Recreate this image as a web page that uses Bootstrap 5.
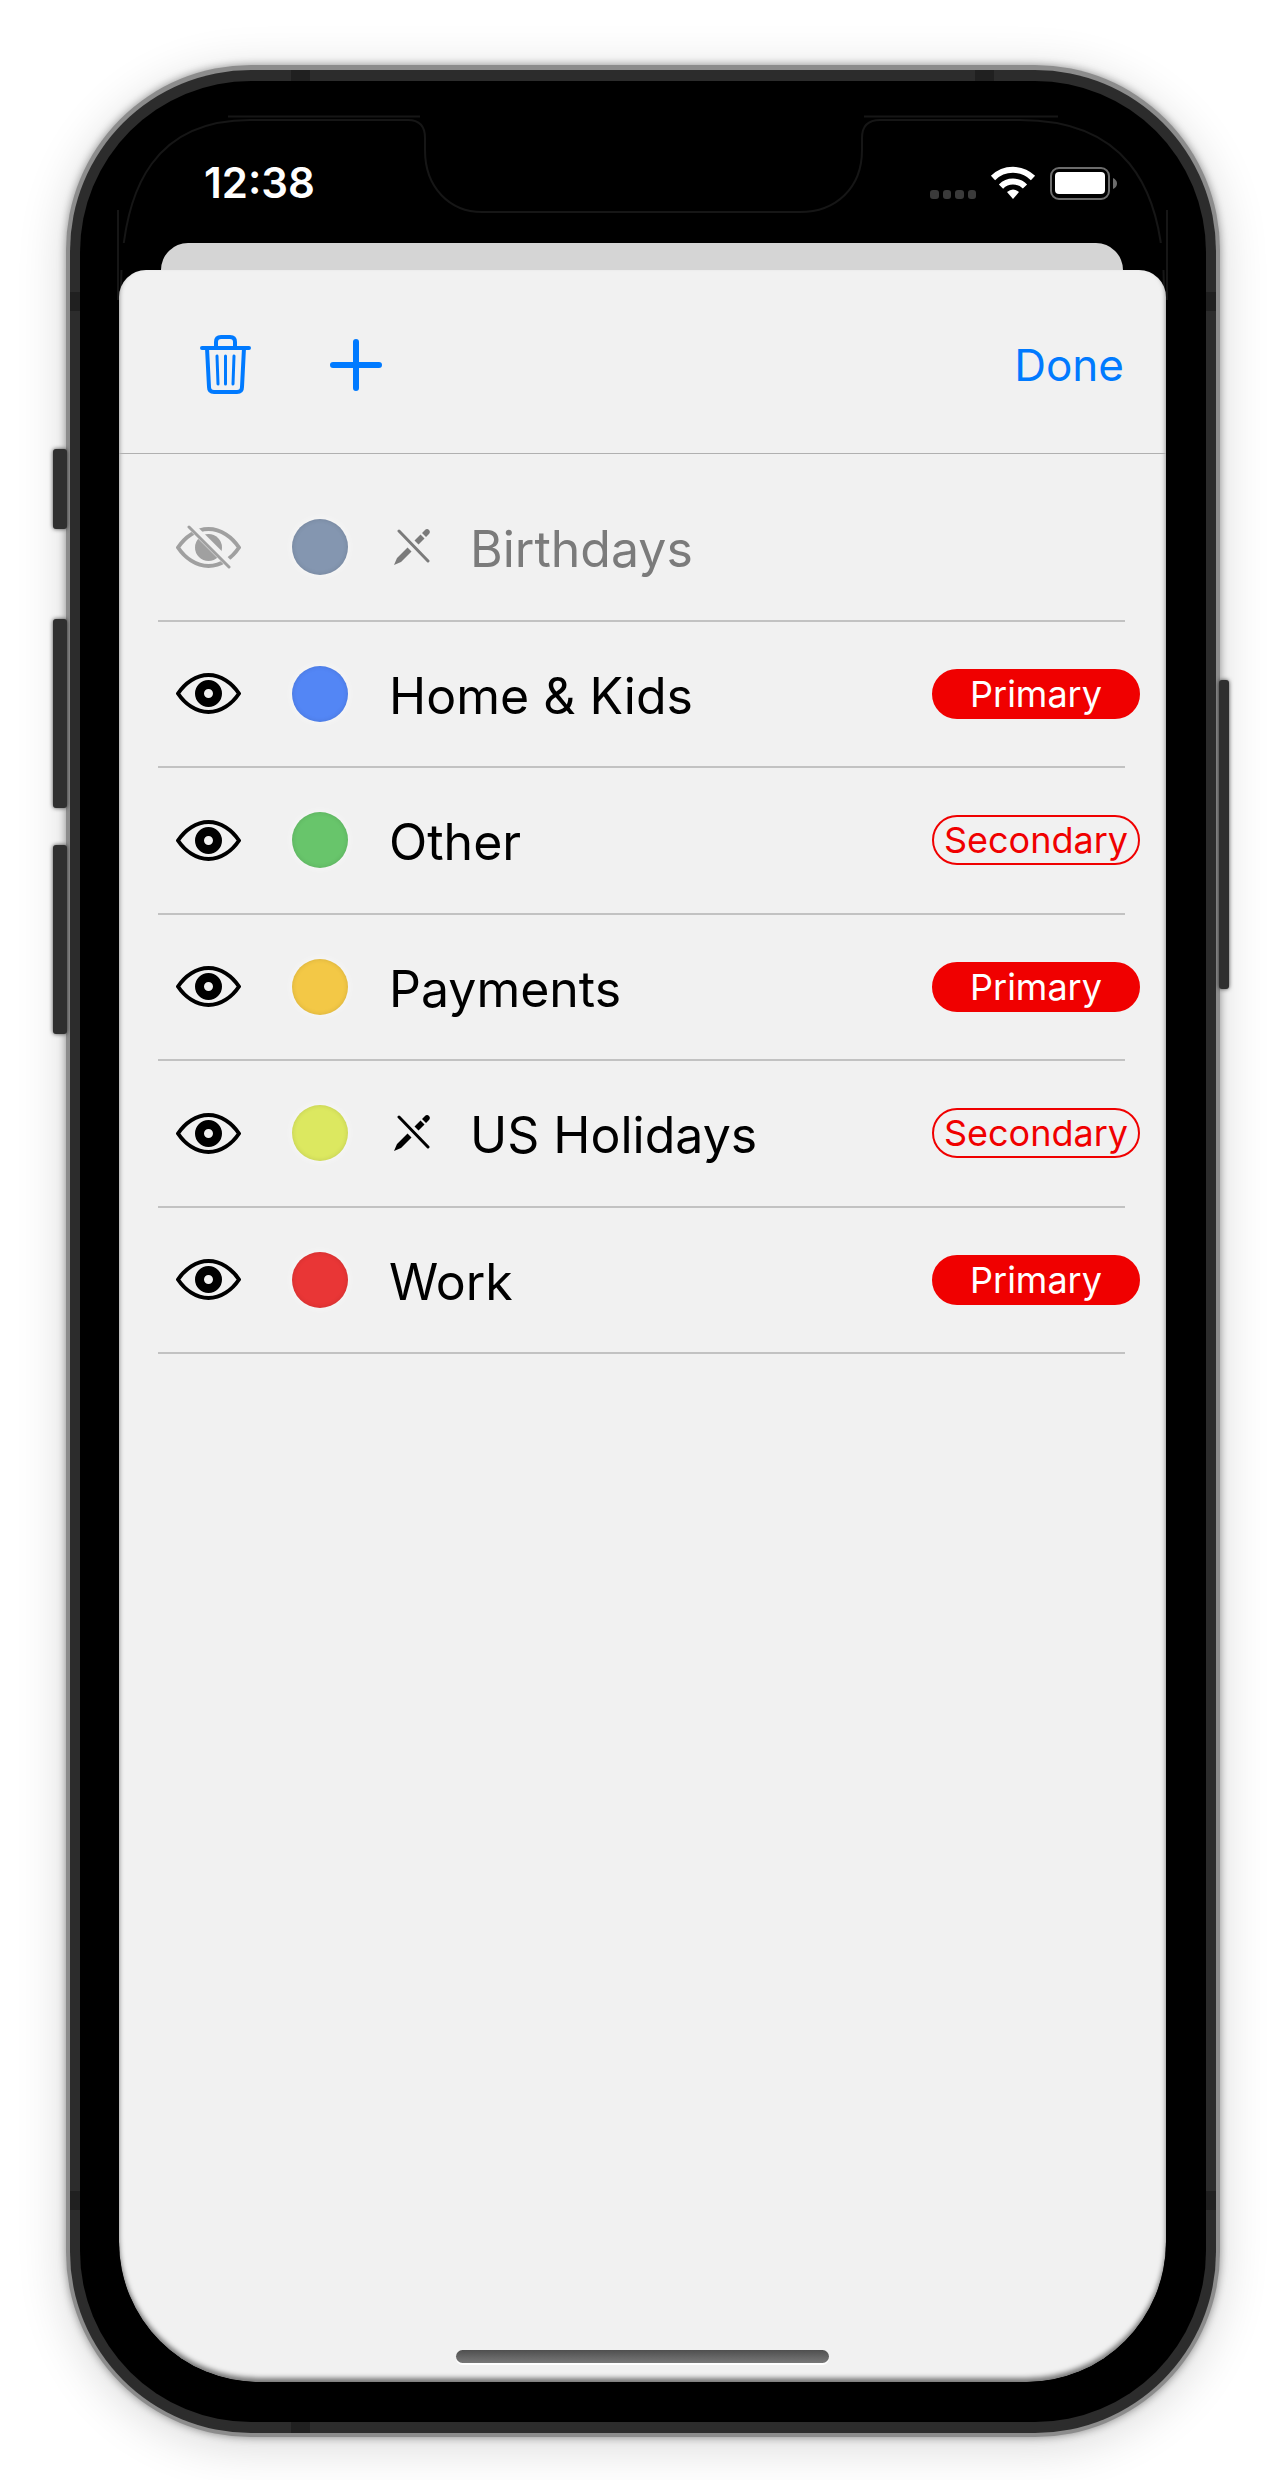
<!DOCTYPE html>
<html lang="en">
<head>
<meta charset="utf-8">
<meta name="viewport" content="width=device-width, initial-scale=1">
<title>Calendars</title>
<link href="https://cdn.jsdelivr.net/npm/bootstrap@5.3.0/dist/css/bootstrap.min.css" rel="stylesheet">
<style>
  body { background: #fff; font-family: Inter, "Liberation Sans", sans-serif; color: #000; }
  .stage { padding: 65px 64px 43px 66px; }
  .device { min-height: 2372px; border-radius: 185px; background: #8c8c8c; padding: 5px 4px 4px; box-shadow: 0 0 8px rgba(0,0,0,.4), 0 8px 50px rgba(0,0,0,.16); }
  .frame { border-radius: 181px; background: #2c2c2c; padding: 11px 10px; }
  .bezel { border-radius: 171px; background: #000; padding: 39px 40px 40px 39px; }
  .screen { border-radius: 140px; overflow: hidden; }
  .side-key { position: absolute; background: #2f2f2f; border-radius: 3px; box-shadow: 0 0 4px rgba(0,0,0,.7); }
  .key-a { left: -13px; top: 384px; width: 14px; height: 80px; }
  .key-b { left: -13px; top: 554px; width: 14px; height: 189px; }
  .key-c { left: -13px; top: 780px; width: 14px; height: 189px; }
  .key-d { right: -9px; top: 615px; width: 10px; height: 309px; }
  .seam { position: absolute; background: #202020; }
  .seam-v { width: 19px; height: 11px; }
  .seam-h { width: 10px; height: 19px; }
  .outline-art { position: absolute; left: 0; top: 0; pointer-events: none; }
  .status-bar { height: 123px; padding: 2px 49px 0 85px; color: #fff; }
  .clock { font-size: 42px; line-height: 42px; font-weight: 600; }
  .under-sheet { height: 27px; margin: 0 43px 0 42px; background: #d5d5d5; border-radius: 27px 27px 0 0; }
  .sheet-gap { background: #000; }
  .sheet { background: #f1f1f1; border-radius: 27px 27px 140px 140px; box-shadow: inset 0 -4px 5px rgba(0,0,0,.5); min-height: 2112px; }
  .sheet-bar { height: 184px; border-bottom: 1px solid #b0b0b0; padding: 7px 42px 0 81px; }
  .tool-gap { gap: 78px; }
  .done-btn { font-size: 44px; line-height: 56px; color: #007aff; }
  .cal-list { height: 879px; margin: 21px 41px 0 39px; }
  .cal-row { border-bottom: 2px solid #c2c2c2; padding-left: 18px; }
  .eye-btn { margin-right: 51px; color: #000; }
  .dot { width: 56px; height: 56px; margin-right: 41px; box-shadow: inset 0 0 5px rgba(0,0,0,.12), 0 0 8px rgba(255,255,255,.6); }
  .cal-name { font-size: 50px; line-height: 60px; padding-top: 4px; }
  .no-edit { margin: 0 40px 0 5px; }
  .dimmed { color: #7b7b7b; }
  .dimmed .eye-btn { color: #a0a0a0; }
  .rank { width: 208px; height: 50px; border: 2px solid #f00000; border-radius: 25px; font-size: 36px; line-height: 44px; margin-right: -15px; }
  .rank-primary { background: #f00000; color: #fff; }
  .rank-secondary { color: #f00000; }
  .home-bar { width: 373px; height: 13px; border-radius: 7px; background: linear-gradient(#4f4f4f, #787878); box-shadow: 0 2px 0 #fff; margin-bottom: 19px; }
</style>
</head>
<body>
<svg width="0" height="0" class="d-none" aria-hidden="true">
  <symbol id="eye" viewBox="0 0 65 41">
    <path d="M2 20.500C9 10 20 2 32.500 2S56 10 63 20.500C56 31 45 39 32.500 39S9 31 2 20.500Z" fill="none" stroke="currentColor" stroke-width="4" stroke-linejoin="round"/>
    <path fill="currentColor" fill-rule="evenodd" d="M32.500 7a13.500 13.500 0 1 0 0 27a13.500 13.500 0 1 0 0-27ZM32.500 16a4.500 4.500 0 1 1 0 9a4.500 4.500 0 1 1 0-9Z"/>
  </symbol>
  <symbol id="no-pencil" viewBox="0 0 36 36">
    <path fill="currentColor" d="M0 36L3 29L13.500 18.500L17.500 22.500L7 33ZM20.500 11.500L26.500 5.500L30.500 9.500L24.500 15.500ZM28 4L30.500 1.500Q33 -1 35 1Q37 3 34.500 5.500L32 8Z"/>
    <path d="M5 2L34 32" stroke="currentColor" stroke-width="3" stroke-linecap="round"/>
  </symbol>
</svg>
<div class="stage">
  <main class="device position-relative">
    <span class="side-key key-a"></span><span class="side-key key-b"></span><span class="side-key key-c"></span><span class="side-key key-d"></span>
    <div class="frame position-relative">
      <span class="seam seam-v" style="left:221px;top:0"></span><span class="seam seam-v" style="right:222px;top:0"></span>
      <span class="seam seam-v" style="left:221px;bottom:0"></span>
      <span class="seam seam-h" style="left:0;top:222px"></span><span class="seam seam-h" style="right:0;top:222px"></span>
      <span class="seam seam-h" style="left:0;bottom:223px"></span><span class="seam seam-h" style="right:0;bottom:223px"></span>
      <div class="bezel position-relative">
        <svg class="outline-art" width="1126" height="230" viewBox="80 81 1126 230" fill="none" stroke="#161616" stroke-width="2" aria-hidden="true">
          <path d="M121 290C121 180 160 120 250 120H408Q425 120 425 138V150C425 188 450 212 482 212H800C836 212 862 188 862 150V138Q862 120 880 120H1020C1120 120 1164 180 1164 290"/>
          <path d="M228 116.500H420M864 116.500H1058M118 210V300M1167 210V300"/>
        </svg>
        <div class="screen position-relative">
          <div class="status-bar d-flex align-items-center">
            <span class="clock me-auto">12:38</span>
            <svg width="187" height="36" viewBox="930 165 187 36" aria-hidden="true">
              <g fill="#3a3a3a"><rect x="930" y="190" width="9" height="9" rx="3"/><rect x="943" y="190" width="8" height="9" rx="3"/><rect x="955" y="190" width="9" height="9" rx="3"/><rect x="968" y="190" width="8" height="9" rx="3"/></g>
              <path d="M1013 199L1007 192Q1013 187 1019 192Z" fill="#fff"/>
              <g fill="none" stroke="#fff" stroke-width="6"><path d="M993 178A28.500 28.500 0 0 1 1033 178"/><path d="M1001 186.500A17 17 0 0 1 1025 186.500"/></g>
              <rect x="1051" y="168" width="58" height="31" rx="8" fill="none" stroke="#6c6c6c" stroke-width="2"/>
              <rect x="1055" y="172" width="50" height="22" rx="4" fill="#fff"/>
              <path d="M1113 178q4 2 4 5.500t-4 5.500Z" fill="#6c6c6c"/>
            </svg>
          </div>
          <div class="sheet-gap"><div class="under-sheet"></div></div>
          <section class="sheet d-flex flex-column">
            <header class="sheet-bar d-flex align-items-center">
              <div class="d-flex align-items-center tool-gap me-auto">
                <button class="btn p-0 border-0 d-flex" type="button" aria-label="Delete">
                  <svg width="51" height="60" viewBox="0 0 51 60" fill="none" stroke="#007aff" stroke-width="4" stroke-linecap="round" stroke-linejoin="round"><path d="M2 13H49M16 12V7Q16 2 21 2H30Q35 2 35 7V12M7 13L9 52Q9 57 14 57H37Q42 57 42 52L44 13"/><path d="M17 21L18 49M25.500 21V49M34 21L33 49" stroke-width="3"/></svg>
                </button>
                <button class="btn p-0 border-0 d-flex" type="button" aria-label="Add">
                  <svg width="54" height="54" viewBox="0 0 54 54" fill="none" stroke="#007aff" stroke-width="6" stroke-linecap="round"><path d="M27 4V50M4 27H50"/></svg>
                </button>
              </div>
              <button class="btn p-0 border-0 done-btn" type="button">Done</button>
            </header>
            <ul class="cal-list list-unstyled d-flex flex-column">
              <li class="cal-row dimmed d-flex flex-fill align-items-center">
                <button class="btn p-0 border-0 d-flex eye-btn" type="button" aria-label="Show Birthdays"><svg width="65" height="45" viewBox="0 -2 65 45"><defs><mask id="cut"><rect x="-2" y="-4" width="70" height="50" fill="#fff"/><path d="M14 -2L58 42" stroke="#000" stroke-width="8"/></mask></defs><g mask="url(#cut)"><path d="M2 20.500C9 10 20 2 32.500 2S56 10 63 20.500C56 31 45 39 32.500 39S9 31 2 20.500Z" fill="none" stroke="currentColor" stroke-width="4" stroke-linejoin="round"/><circle cx="32.500" cy="20.500" r="13.500" fill="currentColor"/></g><path d="M13 0L53 40" stroke="currentColor" stroke-width="3" stroke-linecap="round"/></svg></button>
                <span class="dot rounded-circle" style="background:#8496b0"></span>
                <svg class="no-edit" width="36" height="36"><use href="#no-pencil"/></svg>
                <span class="cal-name me-auto">Birthdays</span>
              </li>
              <li class="cal-row d-flex flex-fill align-items-center">
                <button class="btn p-0 border-0 d-flex eye-btn" type="button" aria-label="Hide Home &amp; Kids"><svg width="65" height="41"><use href="#eye"/></svg></button>
                <span class="dot rounded-circle" style="background:#5386f5"></span>
                <span class="cal-name me-auto">Home &amp; Kids</span>
                <button class="btn p-0 rank rank-primary" type="button">Primary</button>
              </li>
              <li class="cal-row d-flex flex-fill align-items-center">
                <button class="btn p-0 border-0 d-flex eye-btn" type="button" aria-label="Hide Other"><svg width="65" height="41"><use href="#eye"/></svg></button>
                <span class="dot rounded-circle" style="background:#68c56b"></span>
                <span class="cal-name me-auto">Other</span>
                <button class="btn p-0 rank rank-secondary" type="button">Secondary</button>
              </li>
              <li class="cal-row d-flex flex-fill align-items-center">
                <button class="btn p-0 border-0 d-flex eye-btn" type="button" aria-label="Hide Payments"><svg width="65" height="41"><use href="#eye"/></svg></button>
                <span class="dot rounded-circle" style="background:#f3c846"></span>
                <span class="cal-name me-auto">Payments</span>
                <button class="btn p-0 rank rank-primary" type="button">Primary</button>
              </li>
              <li class="cal-row d-flex flex-fill align-items-center">
                <button class="btn p-0 border-0 d-flex eye-btn" type="button" aria-label="Hide US Holidays"><svg width="65" height="41"><use href="#eye"/></svg></button>
                <span class="dot rounded-circle" style="background:#dce860"></span>
                <svg class="no-edit" width="36" height="36"><use href="#no-pencil"/></svg>
                <span class="cal-name me-auto">US Holidays</span>
                <button class="btn p-0 rank rank-secondary" type="button">Secondary</button>
              </li>
              <li class="cal-row d-flex flex-fill align-items-center">
                <button class="btn p-0 border-0 d-flex eye-btn" type="button" aria-label="Hide Work"><svg width="65" height="41"><use href="#eye"/></svg></button>
                <span class="dot rounded-circle" style="background:#e93636"></span>
                <span class="cal-name me-auto">Work</span>
                <button class="btn p-0 rank rank-primary" type="button">Primary</button>
              </li>
            </ul>
            <div class="home-bar mt-auto align-self-center"></div>
          </section>
        </div>
      </div>
    </div>
  </main>
</div>
<script src="https://cdn.jsdelivr.net/npm/bootstrap@5.3.0/dist/js/bootstrap.bundle.min.js"></script>
</body>
</html>
